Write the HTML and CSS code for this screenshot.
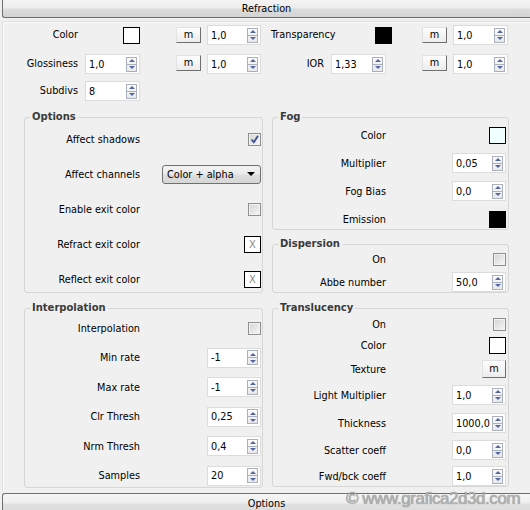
FILE: index.html
```html
<!DOCTYPE html>
<html>
<head>
<meta charset="utf-8">
<title>Refraction</title>
<link rel="stylesheet" href="styles.css">
</head>
<body>
<div class="bar">Refraction</div>
<div class="panel">
  <div class="top">
    <span class="lbl g1">Color</span>
    <span class="swatch white g3 end"></span>
    <span class="mbtn g5">m</span>
    <span class="spin g7"><span class="val">1,0</span><span class="arrows"><i></i><i></i></span></span>
    <span class="lbl g9 left">Transparency</span>
    <span class="swatch black g11 end"></span>
    <span class="mbtn g13">m</span>
    <span class="spin g15"><span class="val">1,0</span><span class="arrows"><i></i><i></i></span></span>

    <span class="lbl g1">Glossiness</span>
    <span class="spin g3"><span class="val">1,0</span><span class="arrows"><i></i><i></i></span></span>
    <span class="mbtn g5 m2">m</span>
    <span class="spin g7"><span class="val">1,0</span><span class="arrows"><i></i><i></i></span></span>
    <span class="lbl g9">IOR</span>
    <span class="spin g11"><span class="val">1,33</span><span class="arrows"><i></i><i></i></span></span>
    <span class="mbtn g13 m2">m</span>
    <span class="spin g15"><span class="val">1,0</span><span class="arrows"><i></i><i></i></span></span>

    <span class="lbl g1">Subdivs</span>
    <span class="spin g3"><span class="val">8</span><span class="arrows"><i></i><i></i></span></span>
  </div>

  <div class="groups">
    <div class="col">
      <fieldset class="grp lcol">
        <legend>Options</legend>
        <div class="rows opts">
          <div class="row"><span class="lbl">Affect shadows</span><span class="chk on"><svg viewBox="0 0 11 11" width="11" height="11"><path d="M2.5 5.5 L4.8 8.3 L9 1.8" stroke="#3d5196" stroke-width="1.8" fill="none"/></svg></span></div>
          <div class="row"><span class="lbl">Affect channels</span><span class="dd">Color + alpha<span class="caret"></span></span></div>
          <div class="row"><span class="lbl">Enable exit color</span><span class="chk"></span></div>
          <div class="row"><span class="lbl">Refract exit color</span><span class="xsw">X</span></div>
          <div class="row"><span class="lbl">Reflect exit color</span><span class="xsw">X</span></div>
        </div>
      </fieldset>
      <fieldset class="grp lcol interp">
        <legend>Interpolation</legend>
        <div class="rows irows">
          <div class="row"><span class="lbl">Interpolation</span><span class="chk"></span></div>
          <div class="row"><span class="lbl">Min rate</span><span class="spin"><span class="val">-1</span><span class="arrows"><i></i><i></i></span></span></div>
          <div class="row"><span class="lbl">Max rate</span><span class="spin"><span class="val">-1</span><span class="arrows"><i></i><i></i></span></span></div>
          <div class="row"><span class="lbl">Clr Thresh</span><span class="spin"><span class="val">0,25</span><span class="arrows"><i></i><i></i></span></span></div>
          <div class="row"><span class="lbl">Nrm Thresh</span><span class="spin"><span class="val">0,4</span><span class="arrows"><i></i><i></i></span></span></div>
          <div class="row"><span class="lbl">Samples</span><span class="spin"><span class="val">20</span><span class="arrows"><i></i><i></i></span></span></div>
        </div>
      </fieldset>
    </div>
    <div class="col">
      <fieldset class="grp rcol">
        <legend>Fog</legend>
        <div class="rows fog">
          <div class="row"><span class="lbl">Color</span><span class="swatch azure"></span></div>
          <div class="row"><span class="lbl">Multiplier</span><span class="spin"><span class="val">0,05</span><span class="arrows"><i></i><i></i></span></span></div>
          <div class="row"><span class="lbl">Fog Bias</span><span class="spin"><span class="val">0,0</span><span class="arrows"><i></i><i></i></span></span></div>
          <div class="row"><span class="lbl">Emission</span><span class="swatch black"></span></div>
        </div>
      </fieldset>
      <fieldset class="grp rcol disp">
        <legend>Dispersion</legend>
        <div class="rows drows">
          <div class="row short"><span class="lbl">On</span><span class="chk"></span></div>
          <div class="row"><span class="lbl">Abbe number</span><span class="spin"><span class="val">50,0</span><span class="arrows"><i></i><i></i></span></span></div>
        </div>
      </fieldset>
      <fieldset class="grp rcol trans">
        <legend>Translucency</legend>
        <div class="rows">
          <div class="row on18"><span class="lbl">On</span><span class="chk"></span></div>
          <div class="row mt2"><span class="lbl">Color</span><span class="swatch white"></span></div>
          <div class="row mt4"><span class="lbl">Texture</span><span class="mbtn tall">m</span></div>
          <div class="row mt6"><span class="lbl">Light Multiplier</span><span class="spin"><span class="val">1,0</span><span class="arrows"><i></i><i></i></span></span></div>
          <div class="row mt8"><span class="lbl">Thickness</span><span class="spin"><span class="val">1000,0</span><span class="arrows"><i></i><i></i></span></span></div>
          <div class="row mt7"><span class="lbl">Scatter coeff</span><span class="spin"><span class="val">0,0</span><span class="arrows"><i></i><i></i></span></span></div>
          <div class="row mt6"><span class="lbl">Fwd/bck coeff</span><span class="spin"><span class="val">1,0</span><span class="arrows"><i></i><i></i></span></span></div>
        </div>
      </fieldset>
    </div>
  </div>
</div>
<div class="bar foot">Options</div>
<div class="watermark">© www.grafica2d3d.com</div>
</body>
</html>
```

FILE: styles.css
```css
* { box-sizing: border-box; }
html, body { margin: 0; padding: 0; }
body {
  width: 530px;
  height: 510px;
  overflow: hidden;
  position: relative;
  background: #f0f0f0;
  font: 10.8px "DejaVu Sans Condensed", "Liberation Sans", Arial, sans-serif;
  color: #000;
}

/* rollout bars */
.bar {
  margin-left: 2px;
  height: 18px;
  border-left: 1px solid #6e6e6e;
  border-bottom: 1px solid #6e6e6e;
  border-bottom-left-radius: 3px;
  background: linear-gradient(#f4f4f4 0%, #ededed 45%, #dcdcdc 55%, #d4d4d4 100%);
  text-align: center;
  line-height: 17px;
  color: #000;
}
.bar.foot {
  margin-top: 2px;
  height: 20px;
  border-bottom: none;
  border-top: 1px solid #6e6e6e;
  border-radius: 3px 0 0 0;
  line-height: 20px;
  background: linear-gradient(#f7f7f7 0%, #eeeeee 45%, #e0e0e0 55%, #dadada 100%);
}

.panel {
  margin: 3px 0 0 2px;
  height: 470px;
  border-top: 1px solid #dedede;
  border-left: 1px solid #dedede;
  box-shadow: inset 1px 1px 0 #fbfbfb;
}

/* top rows */
.top {
  display: grid;
  grid-template-columns: 75px 7px 55px 36px 25px 6px 54px 10px 53px 7px 61px 30px 25px 6px 55px;
  grid-template-rows: 29px 27px 20px;
  align-items: start;
  padding-top: 3px;
}
.g1 { grid-column: 1; }
.g3 { grid-column: 3; }
.g5 { grid-column: 5; }
.g7 { grid-column: 7; }
.g9 { grid-column: 9; }
.g11 { grid-column: 11; }
.g13 { grid-column: 13; }
.g15 { grid-column: 15; }
.top .lbl { text-align: right; line-height: 20px; white-space: nowrap; }
.top .lbl.left { text-align: left; }
.top .end { justify-self: end; }
.top .swatch { margin-top: 2px; }
.top .mbtn { margin-top: 2px; }
.top .mbtn.m2 { margin-top: 1px; }
.top .g11.spin { width: 55px; }
.top .g3.spin, .top .g15.spin { width: 55px; }

.lbl { white-space: nowrap; }

/* spinner */
.spin {
  display: flex;
  align-items: center;
  width: 54px;
  height: 20px;
  background: #fff;
  border: 1px solid #dcdcdc;
}
.val { flex: 1; padding-left: 3px; color: #000; }
.arrows {
  display: flex;
  flex-direction: column;
  width: 11px;
  height: 15px;
  margin-right: 2px;
  border: 1px solid #aab0be;
  background: linear-gradient(#fbfbfb, #e9e9ec);
}
.arrows i {
  flex: 1;
  display: flex;
  align-items: center;
  justify-content: center;
}
.arrows i:first-child { border-bottom: 1px solid #aab0be; }
.arrows i:first-child::before {
  content: "";
  border-left: 3px solid transparent;
  border-right: 3px solid transparent;
  border-bottom: 3px solid #5466a0;
}
.arrows i:last-child::before {
  content: "";
  border-left: 3px solid transparent;
  border-right: 3px solid transparent;
  border-top: 3px solid #5466a0;
}

/* swatches */
.swatch {
  display: block;
  width: 17px;
  height: 17px;
  border: 1px solid #000;
}
.white { background: #fff; }
.black { background: #000; }
.azure { background: #f0ffff; }
.xsw {
  display: block;
  width: 17px;
  height: 17px;
  border: 1px solid #000;
  background: #fff;
  color: #8a8a8a;
  font-size: 11px;
  line-height: 15px;
  text-align: center;
}

/* m button */
.mbtn {
  display: block;
  width: 25px;
  height: 16px;
  border: 1px solid;
  border-color: #e2e2e2 #6f6f6f #6f6f6f #e2e2e2;
  background: linear-gradient(#fdfdfd, #ececec);
  text-align: center;
  line-height: 13px;
  color: #000;
}
.mbtn.tall { width: 24px; height: 18px; line-height: 16px; }

/* checkbox */
.chk {
  display: flex;
  align-items: center;
  justify-content: center;
  width: 13px;
  height: 13px;
  border: 1px solid #8e8f8f;
  background: linear-gradient(135deg, #d3d3d3, #f7f7f7);
  box-shadow: inset 0 0 0 1px #f2f2f2;
}
.chk svg { display: block; }

/* dropdown */
.dd {
  display: flex;
  align-items: center;
  justify-content: space-between;
  width: 99px;
  height: 19px;
  padding: 0 5px 0 4px;
  border: 1px solid #707070;
  border-radius: 3px;
  background: linear-gradient(#f3f3f3 0%, #ebebeb 48%, #dedede 52%, #d6d6d6 100%);
  color: #000;
}
.caret {
  border-left: 4px solid transparent;
  border-right: 4px solid transparent;
  border-top: 4px solid #000;
}

/* groups */
.groups {
  display: grid;
  grid-template-columns: 239px 237px;
  column-gap: 9px;
  margin: 9px 0 0 21px;
  align-items: start;
}
.col { display: flex; flex-direction: column; }
.grp {
  margin: 0;
  padding: 0 2px 0 0;
  min-width: 0;
  border: 1px solid #d6d6d6;
  border-radius: 3px;
}
.grp.lcol { padding-right: 1px; }
.grp legend {
  margin-left: 5px;
  padding: 0 2px;
  font: bold 10px "DejaVu Sans", sans-serif;
  line-height: 14px;
  color: #3a3a3a;
}
.rows { display: flex; flex-direction: column; }
.row {
  display: grid;
  align-items: center;
  height: 20px;
}
.row .lbl { text-align: right; }
.row > :last-child { justify-self: end; }
.lcol .row { grid-template-columns: 115px 1fr; }
.rcol .row { grid-template-columns: 113px 1fr; }

.opts { padding: 5px 0 3px; gap: 15px; }
.interp { margin-top: 8px; }
.irows { padding: 3px 0 1px; gap: 9.6px; }
.fog { padding: 1px 0 0; gap: 8px; }
.disp { margin-top: 7px; }
.drows { gap: 5px; }
.row.short { height: 16px; }
.trans { margin-top: 8px; }
.row.on18 { height: 18px; }
.mt2 { margin-top: 2px; }
.mt4 { margin-top: 4px; }
.mt6 { margin-top: 6px; }
.mt7 { margin-top: 7px; }
.mt8 { margin-top: 8px; }

/* watermark overlay */
.watermark {
  position: absolute;
  left: 346px;
  top: 490px;
  font: 17px/17px "Liberation Sans", Arial, sans-serif;
  letter-spacing: -0.45px;
  color: #b3b3b3;
  text-shadow: 0 0 1px #6f6f6f;
  white-space: nowrap;
}
```
